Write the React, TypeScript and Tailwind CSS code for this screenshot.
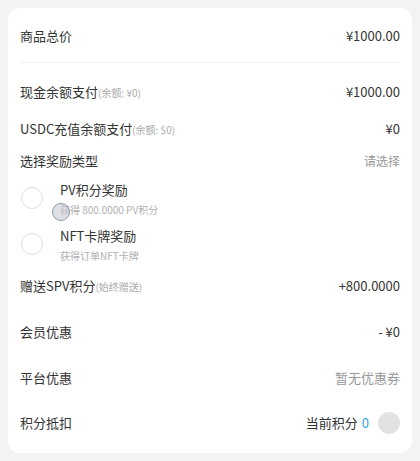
const Row = ({ label, note, children, className = "" }: { label: string; note?: string; children?: React.ReactNode; className?: string }) => (
  <div className={`flex items-center justify-between ${className}`}>
    <div className="flex items-baseline">
      <span className="text-[13px] text-[#333]">{label}</span>
      {note && <span className="text-[10px] text-[#aaa]">{note}</span>}
    </div>
    {children}
  </div>
);

const Radio = ({ title, desc, className = "" }: { title: string; desc: string; className?: string }) => (
  <div className={`flex ${className}`}>
    <div className="mt-[7px] ml-[1px] h-[22px] w-[22px] shrink-0 rounded-full border border-[#ddd]" />
    <div className="ml-[17px] flex flex-col">
      <span className="h-5 text-[13px] leading-5 text-[#333]">{title}</span>
      <span className="mt-[2px] h-4 text-[10px] leading-4 text-[#b0b0b0]">{desc}</span>
    </div>
  </div>
);

export default function App() {
  return (
    <div
      className="h-[461px] w-[420px] bg-[#f3f3f3] p-2"
      style={{ fontFamily: '"Noto Sans CJK SC", "Noto Sans", sans-serif' }}
    >
      <div className="relative h-[445px] rounded-xl bg-white px-3">
        <Row label="商品总价" className="h-[54px] pt-[1px]">
          <span className="text-[13px] text-[#333]">¥1000.00</span>
        </Row>
        <div className="h-px bg-[#f0f0f0]" />
        <Row label="现金余额支付" note="(余额: ¥0)" className="mt-[7px] h-[44px]">
          <span className="text-[13px] text-[#333]">¥1000.00</span>
        </Row>
        <Row label="USDC充值余额支付" note="(余额: $0)" className="h-[30px]">
          <span className="text-[13px] text-[#333]">¥0</span>
        </Row>
        <Row label="选择奖励类型" className="h-[32px] pt-[1px]">
          <span className="text-[12px] text-[#999]">请选择</span>
        </Row>
        <Radio title="PV积分奖励" desc="获得 800.0000 PV积分" className="h-[45px] pt-[4px]" />
        <Radio title="NFT卡牌奖励" desc="获得订单NFT卡牌" className="h-[42px] pt-[5px]" />
        <Row label="赠送SPV积分" note="(始终赠送)" className="h-[46px]">
          <span className="text-[13px] text-[#333]">+800.0000</span>
        </Row>
        <Row label="会员优惠" className="h-[46px]">
          <span className="text-[13px] text-[#333]">- ¥0</span>
        </Row>
        <Row label="平台优惠" className="h-[46px]">
          <span className="text-[13px] text-[#999]">暂无优惠券</span>
        </Row>
        <Row label="积分抵扣" className="h-[44px]">
          <div className="flex items-center">
            <span className="text-[13px] text-[#333]">当前积分</span>
            <span className="ml-1 text-[13px] text-[#2ba6e1]">0</span>
            <div className="ml-[9px] h-[22px] w-[22px] rounded-full bg-[#e2e2e2]" />
          </div>
        </Row>
        <div className="absolute left-[44px] top-[195px] h-[18px] w-[18px] rounded-full border border-[#8c95a8] bg-[#c6cad4]/60" />
      </div>
    </div>
  );
}
